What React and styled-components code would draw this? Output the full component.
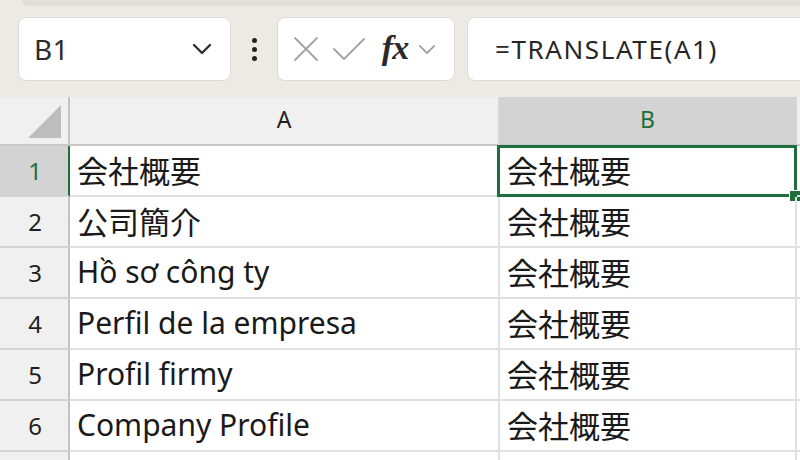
import React from "react";
import styled, { createGlobalStyle } from "styled-components";

const GlobalStyle = createGlobalStyle`
  html, body { margin: 0; padding: 0; background: #ffffff; }
  body { overflow: hidden; }
  * { box-sizing: border-box; }
`;

const GREEN = "#1f6e3c";
const UI_FONT = `"Noto Sans", "Noto Sans CJK JP", sans-serif`;

const Page = styled.div`
  width: 800px;
  height: 460px;
  overflow: hidden;
  background: #ffffff;
  font-family: ${UI_FONT};
`;

const Toolbar = styled.div`
  height: 97px;
  background: #edeae6;
  display: flex;
  flex-direction: column;
  overflow: hidden;
`;

const RibbonEdge = styled.div`
  height: 5px;
  margin-left: 22px;
  background: #e2ded9;
  border-bottom-left-radius: 6px;
  box-shadow: 0 1px 1px rgba(0, 0, 0, 0.04);
`;

const BarRow = styled.div`
  display: flex;
  align-items: stretch;
  height: 64px;
  margin-top: 12px;
  padding-left: 18px;
`;

const Box = styled.div`
  background: #ffffff;
  border: 1px solid #dedad5;
  border-radius: 8px;
  display: flex;
  align-items: center;
  flex-shrink: 0;
`;

const NameBox = styled(Box)`
  width: 213px;
  padding: 0 18px 0 15px;
  justify-content: space-between;
`;

const CellRef = styled.span`
  font-size: 28px;
  color: #2b2b2b;
  letter-spacing: 0.3px;
`;

const Handle = styled.div`
  width: 46px;
  flex-shrink: 0;
  display: flex;
  flex-direction: column;
  align-items: center;
  justify-content: center;
  gap: 4px;
`;

const Dot = styled.span`
  width: 5px;
  height: 5px;
  border-radius: 50%;
  background: #222;
`;

const ButtonsBox = styled(Box)`
  width: 178px;
  padding: 0 0 0 10px;
`;

const IconSlot = styled.span`
  display: inline-flex;
  align-items: center;
  justify-content: center;
  width: ${(p) => p.$w}px;
`;

const Fx = styled.span`
  font-family: "Liberation Serif", "DejaVu Serif", serif;
  font-style: italic;
  font-weight: 700;
  font-size: 34px;
  line-height: 1;
  color: #2a2a2a;
  letter-spacing: -1px;
  margin-top: -2px;
`;

const FormulaBox = styled(Box)`
  width: 360px;
  margin-left: 12px;
  padding-left: 27px;
`;

const FormulaText = styled.span`
  font-size: 26px;
  letter-spacing: 1.6px;
  color: #262626;
`;

const Grid = styled.div`
  display: grid;
  grid-template-columns: 70px 430px 297px 60px;
  grid-template-rows: 49px repeat(7, 51px);
  background: #ffffff;
`;

const Corner = styled.div`
  background: #f0f0f0;
  border-right: 2px solid #c3c3c3;
  border-bottom: 2px solid #c8c8c8;
  display: flex;
  align-items: flex-end;
  justify-content: flex-end;
  padding: 0 7px 6px 0;
`;

const ColHead = styled.div`
  background: ${(p) => (p.$active ? "#d3d3d3" : "#f0f0f0")};
  color: ${(p) => (p.$active ? GREEN : "#1f1f1f")};
  border-right: 2px solid #d6d6d6;
  border-bottom: 2px solid #c8c8c8;
  display: flex;
  align-items: center;
  justify-content: center;
  font-size: 23px;
  padding-bottom: 4px;
`;

const RowHead = styled.div`
  background: ${(p) => (p.$active ? "#d3d3d3" : "#f0f0f0")};
  color: ${(p) => (p.$active ? GREEN : "#1f1f1f")};
  border-right: 2px solid ${(p) => (p.$active ? GREEN : "#c3c3c3")};
  border-bottom: 2px solid #d4d4d4;
  display: flex;
  align-items: center;
  justify-content: center;
  font-size: 24px;
  padding-left: 2px;
`;

const Cell = styled.div`
  position: relative;
  border-right: 2px solid #e1e1e1;
  border-bottom: 2px solid #e1e1e1;
  display: flex;
  align-items: center;
  padding: 0 0 3px 7px;
  font-size: 30px;
  color: #1a1a1a;
  white-space: nowrap;
`;

const CjkText = styled.span`
  font-family: "Noto Sans CJK JP", sans-serif;
  font-size: 31px;
`;

const Selection = styled.div`
  position: absolute;
  left: -3px;
  top: -1px;
  right: -2px;
  bottom: -2px;
  border: 3px solid ${GREEN};
  pointer-events: none;
`;

const FillHandle = styled.span`
  position: absolute;
  right: -6px;
  bottom: -7px;
  width: 10px;
  height: 10px;
  background: ${GREEN};
  outline: 1px solid #ffffff;
`;

const rows = [
  { n: 1, a: "会社概要", cjk: true, b: "会社概要" },
  { n: 2, a: "公司簡介", cjk: true, b: "会社概要" },
  { n: 3, a: "Hồ sơ công ty", b: "会社概要" },
  { n: 4, a: "Perfil de la empresa", b: "会社概要" },
  { n: 5, a: "Profil firmy", b: "会社概要" },
  { n: 6, a: "Company Profile", b: "会社概要" },
  { n: 7, a: "", b: "", hideNum: true },
];

const Chevron = ({ color, size, stroke }) => (
  <svg width={size} height={size / 2 + 2} viewBox="0 0 20 12" fill="none">
    <polyline points="2,2 10,10 18,2" stroke={color} strokeWidth={stroke} strokeLinecap="round" strokeLinejoin="round" />
  </svg>
);

export default function App() {
  return (
    <Page>
      <GlobalStyle />
      <Toolbar>
        <RibbonEdge />
        <BarRow>
          <NameBox>
            <CellRef>B1</CellRef>
            <Chevron color="#303030" size={20} stroke={2.4} />
          </NameBox>
          <Handle>
            <Dot />
            <Dot />
            <Dot />
          </Handle>
          <ButtonsBox>
            <IconSlot $w={36}>
              <svg width="26" height="26" viewBox="0 0 26 26" fill="none">
                <path d="M2 2 L24 24 M24 2 L2 24" stroke="#a3a3a3" strokeWidth="1.8" strokeLinecap="round" />
              </svg>
            </IconSlot>
            <IconSlot $w={50}>
              <svg width="34" height="24" viewBox="0 0 34 24" fill="none">
                <polyline points="2,12 12,22 32,2" stroke="#a3a3a3" strokeWidth="1.8" strokeLinecap="round" strokeLinejoin="round" />
              </svg>
            </IconSlot>
            <IconSlot $w={42}>
              <Fx>fx</Fx>
            </IconSlot>
            <IconSlot $w={22}>
              <Chevron color="#9a9a9a" size={18} stroke={1.8} />
            </IconSlot>
          </ButtonsBox>
          <FormulaBox>
            <FormulaText>=TRANSLATE(A1)</FormulaText>
          </FormulaBox>
        </BarRow>
      </Toolbar>
      <Grid>
        <Corner>
          <svg width="33" height="33" viewBox="0 0 33 33">
            <polygon points="33,0 33,33 0,33" fill="#bdbdbd" />
          </svg>
        </Corner>
        <ColHead>A</ColHead>
        <ColHead $active>B</ColHead>
        <ColHead />
        {rows.map((r) => (
          <React.Fragment key={r.n}>
            <RowHead $active={r.n === 1}>{r.hideNum ? null : r.n}</RowHead>
            <Cell>{r.cjk ? <CjkText>{r.a}</CjkText> : r.a}</Cell>
            <Cell>
              {r.b && <CjkText>{r.b}</CjkText>}
              {r.n === 1 && (
                <Selection>
                  <FillHandle />
                </Selection>
              )}
            </Cell>
            <Cell />
          </React.Fragment>
        ))}
      </Grid>
    </Page>
  );
}
